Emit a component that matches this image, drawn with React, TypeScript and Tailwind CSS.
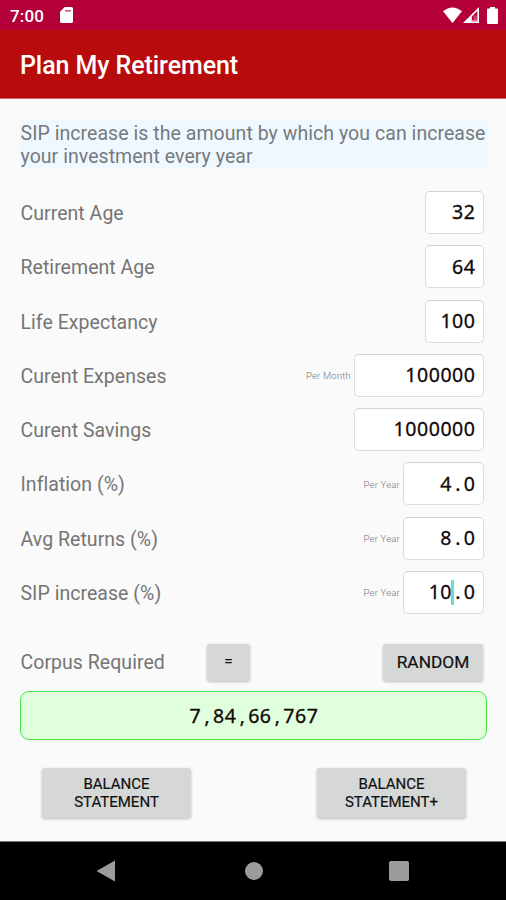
import React from "react";

type Field = {
  label: string;
  value: string;
  width: string;
  period?: string;
  caretAt?: number;
};

const fields: Field[] = [
  { label: "Current Age", value: "32", width: "w-[59px]" },
  { label: "Retirement Age", value: "64", width: "w-[59px]" },
  { label: "Life Expectancy", value: "100", width: "w-[59px]" },
  { label: "Curent Expenses", value: "100000", width: "w-[130px]", period: "Per Month" },
  { label: "Curent Savings", value: "1000000", width: "w-[130px]" },
  { label: "Inflation (%)", value: "4.0", width: "w-[81px]", period: "Per Year" },
  { label: "Avg Returns (%)", value: "8.0", width: "w-[81px]", period: "Per Year" },
  { label: "SIP increase (%)", value: "10.0", width: "w-[81px]", period: "Per Year", caretAt: 2 },
];

// Digits share one width, punctuation is padded out to the same cell
const Mono = ({ text }: { text: string }) => (
  <span className="font-['Noto_Sans',sans-serif] text-[19.5px] leading-none tracking-[0.55px] text-[#120808] whitespace-nowrap [-webkit-text-stroke:0.3px_#120808]">
    {text.split(/([.,])/).map((part, i) =>
      part === "." || part === "," ? (
        <span key={i} className="px-[3.25px] tracking-[-0.03px]">
          {part}
        </span>
      ) : (
        part
      )
    )}
  </span>
);

const StatusBar = () => (
  <div className="h-[30px] bg-[#b40038] flex items-center text-white">
    <span className="ml-[10px] mt-[2px] w-[50px] text-[17px] font-medium leading-none tracking-[0.15px]">7:00</span>
    <svg width="13" height="16" viewBox="0 0 13 16" fill="currentColor">
      <path
        fillRule="evenodd"
        d="M4.8 0H11.5Q13 0 13 1.5V14.5Q13 16 11.5 16H1.5Q0 16 0 14.5V4.8ZM5 3V4.6H11V3Z"
      />
      <path d="M5 3H11V4.6H5Z" opacity=".35" />
    </svg>
    <div className="ml-auto mr-[8px] flex items-center">
      <svg width="19" height="16" viewBox="0 0 19 16" fill="currentColor">
        <path d="M9.5 16L0 4.2Q9.5-3.4 19 4.2Z" />
      </svg>
      <svg className="ml-px" width="16" height="16" viewBox="0 0 16 16" fill="currentColor">
        <path fillRule="evenodd" d="M16 0V16H0ZM14.4 4L8.8 9.6V14.4H14.4Z" />
        <path d="M10.5 8.5H14.4V13H10.5Z" opacity=".25" />
        <path d="M8.8 13.2H14.4V14.4H8.8Z" opacity=".7" />
      </svg>
      <svg className="ml-[8px]" width="11" height="17" viewBox="0 0 11 17" fill="currentColor">
        <path d="M3 0H8V1.6H10Q11 1.6 11 2.6V16Q11 17 10 17H1Q0 17 0 16V2.6Q0 1.6 1 1.6H3Z" />
      </svg>
    </div>
  </div>
);

const FieldRow = ({ label, value, width, period, caretAt }: Field) => (
  <div className="h-[54.3px] flex items-start pr-[22px]">
    <div className="h-[43px] flex-1 flex items-center">
      <span className="pt-[3px] pl-[0.5px] text-[19.5px] leading-6 tracking-[0.04px] text-[#757575]">{label}</span>
      {period && (
        <span className="ml-auto mr-[3px] pt-[2px] text-[9.5px] font-light tracking-[0.2px] text-[#777]">{period}</span>
      )}
    </div>
    <div
      className={`${width} h-[43px] pr-[7.5px] pb-px flex items-center justify-end bg-white border border-[#dcdcdc] border-t-[#d2d2d2] rounded-[5px]`}
    >
      {caretAt ? (
        <span className="relative flex items-center">
          <Mono text={value} />
          <span className="absolute left-[22px] top-[-2px] w-[3px] h-[25px] bg-[#66dfc6]" />
        </span>
      ) : (
        <Mono text={value} />
      )}
    </div>
  </div>
);

const Button = ({ className, children }: { className: string; children: React.ReactNode }) => (
  <button
    className={`flex items-center justify-center text-center bg-[#d6d8d7] rounded-[3px] text-[#111] shadow-[0_1px_3px_rgba(0,0,0,0.25)] ${className}`}
  >
    {children}
  </button>
);

const NavBar = () => (
  <div className="h-[59px] bg-black border-t border-[#777] flex items-center justify-between pl-[96px] pr-[97px] text-[#9b9b9b]">
    <svg width="20" height="22" viewBox="0 0 20 22" fill="currentColor">
      <path d="M0.5 11L19 0.5V21.5Z" />
    </svg>
    <div className="w-[18px] h-[18px] ml-[2px] rounded-full bg-[#9b9b9b]" />
    <div className="w-[20px] h-[20px] rounded-[2px] bg-[#9b9b9b]" />
  </div>
);

const App = () => {
  return (
    <div className="w-[506px] h-[900px] flex flex-col overflow-hidden bg-[#fafafa] font-['Roboto',sans-serif]">
      <StatusBar />
      <header className="h-[69px] bg-[#b80b0b] border-b border-[#d06a6a] flex items-center pl-[20px] pt-[3px]">
        <h1 className="text-[25px] font-medium leading-none tracking-[-0.08px] text-white">Plan My Retirement</h1>
      </header>

      <main className="flex-1 pl-[20px]">
        <p className="mt-[21px] w-[469px] h-[49px] pt-[2px] pl-[0.5px] bg-[#f0f8ff] text-[19.5px] leading-[23px] tracking-[0.05px] text-[#757a7e]">
          SIP increase is the amount by which you can increase your investment every year
        </p>

        <div className="mt-[22px]">
          {fields.map((field) => (
            <FieldRow key={field.label} {...field} />
          ))}
        </div>

        <div className="mt-[18.6px] h-[37px] flex items-center pr-[23px]">
          <span className="w-[187px] pt-px pl-[0.5px] text-[19.5px] tracking-[0.04px] text-[#757575]">
            Corpus Required
          </span>
          <Button className="w-[43px] h-[37px] text-[16px]">=</Button>
          <Button className="ml-auto w-[100px] h-[37px] pt-px text-[17.3px] [-webkit-text-stroke:0.2px_#111]">
            RANDOM
          </Button>
        </div>

        <div className="mt-[10px] w-[467px] h-[49px] pl-px flex items-center justify-center bg-[#dfffdd] border border-[#4be34b] rounded-[9px]">
          <Mono text="7,84,66,767" />
        </div>

        <div className="mt-[28px] pl-[22px] pr-[40px] flex justify-between">
          <Button className="w-[149px] h-[50px] pt-px text-[15px] leading-[18px] [-webkit-text-stroke:0.2px_#111]">
            BALANCE
            <br />
            STATEMENT
          </Button>
          <Button className="w-[149px] h-[50px] pt-px text-[15px] leading-[18px] [-webkit-text-stroke:0.2px_#111]">
            BALANCE
            <br />
            STATEMENT+
          </Button>
        </div>
      </main>

      <NavBar />
    </div>
  );
};

export default App;
